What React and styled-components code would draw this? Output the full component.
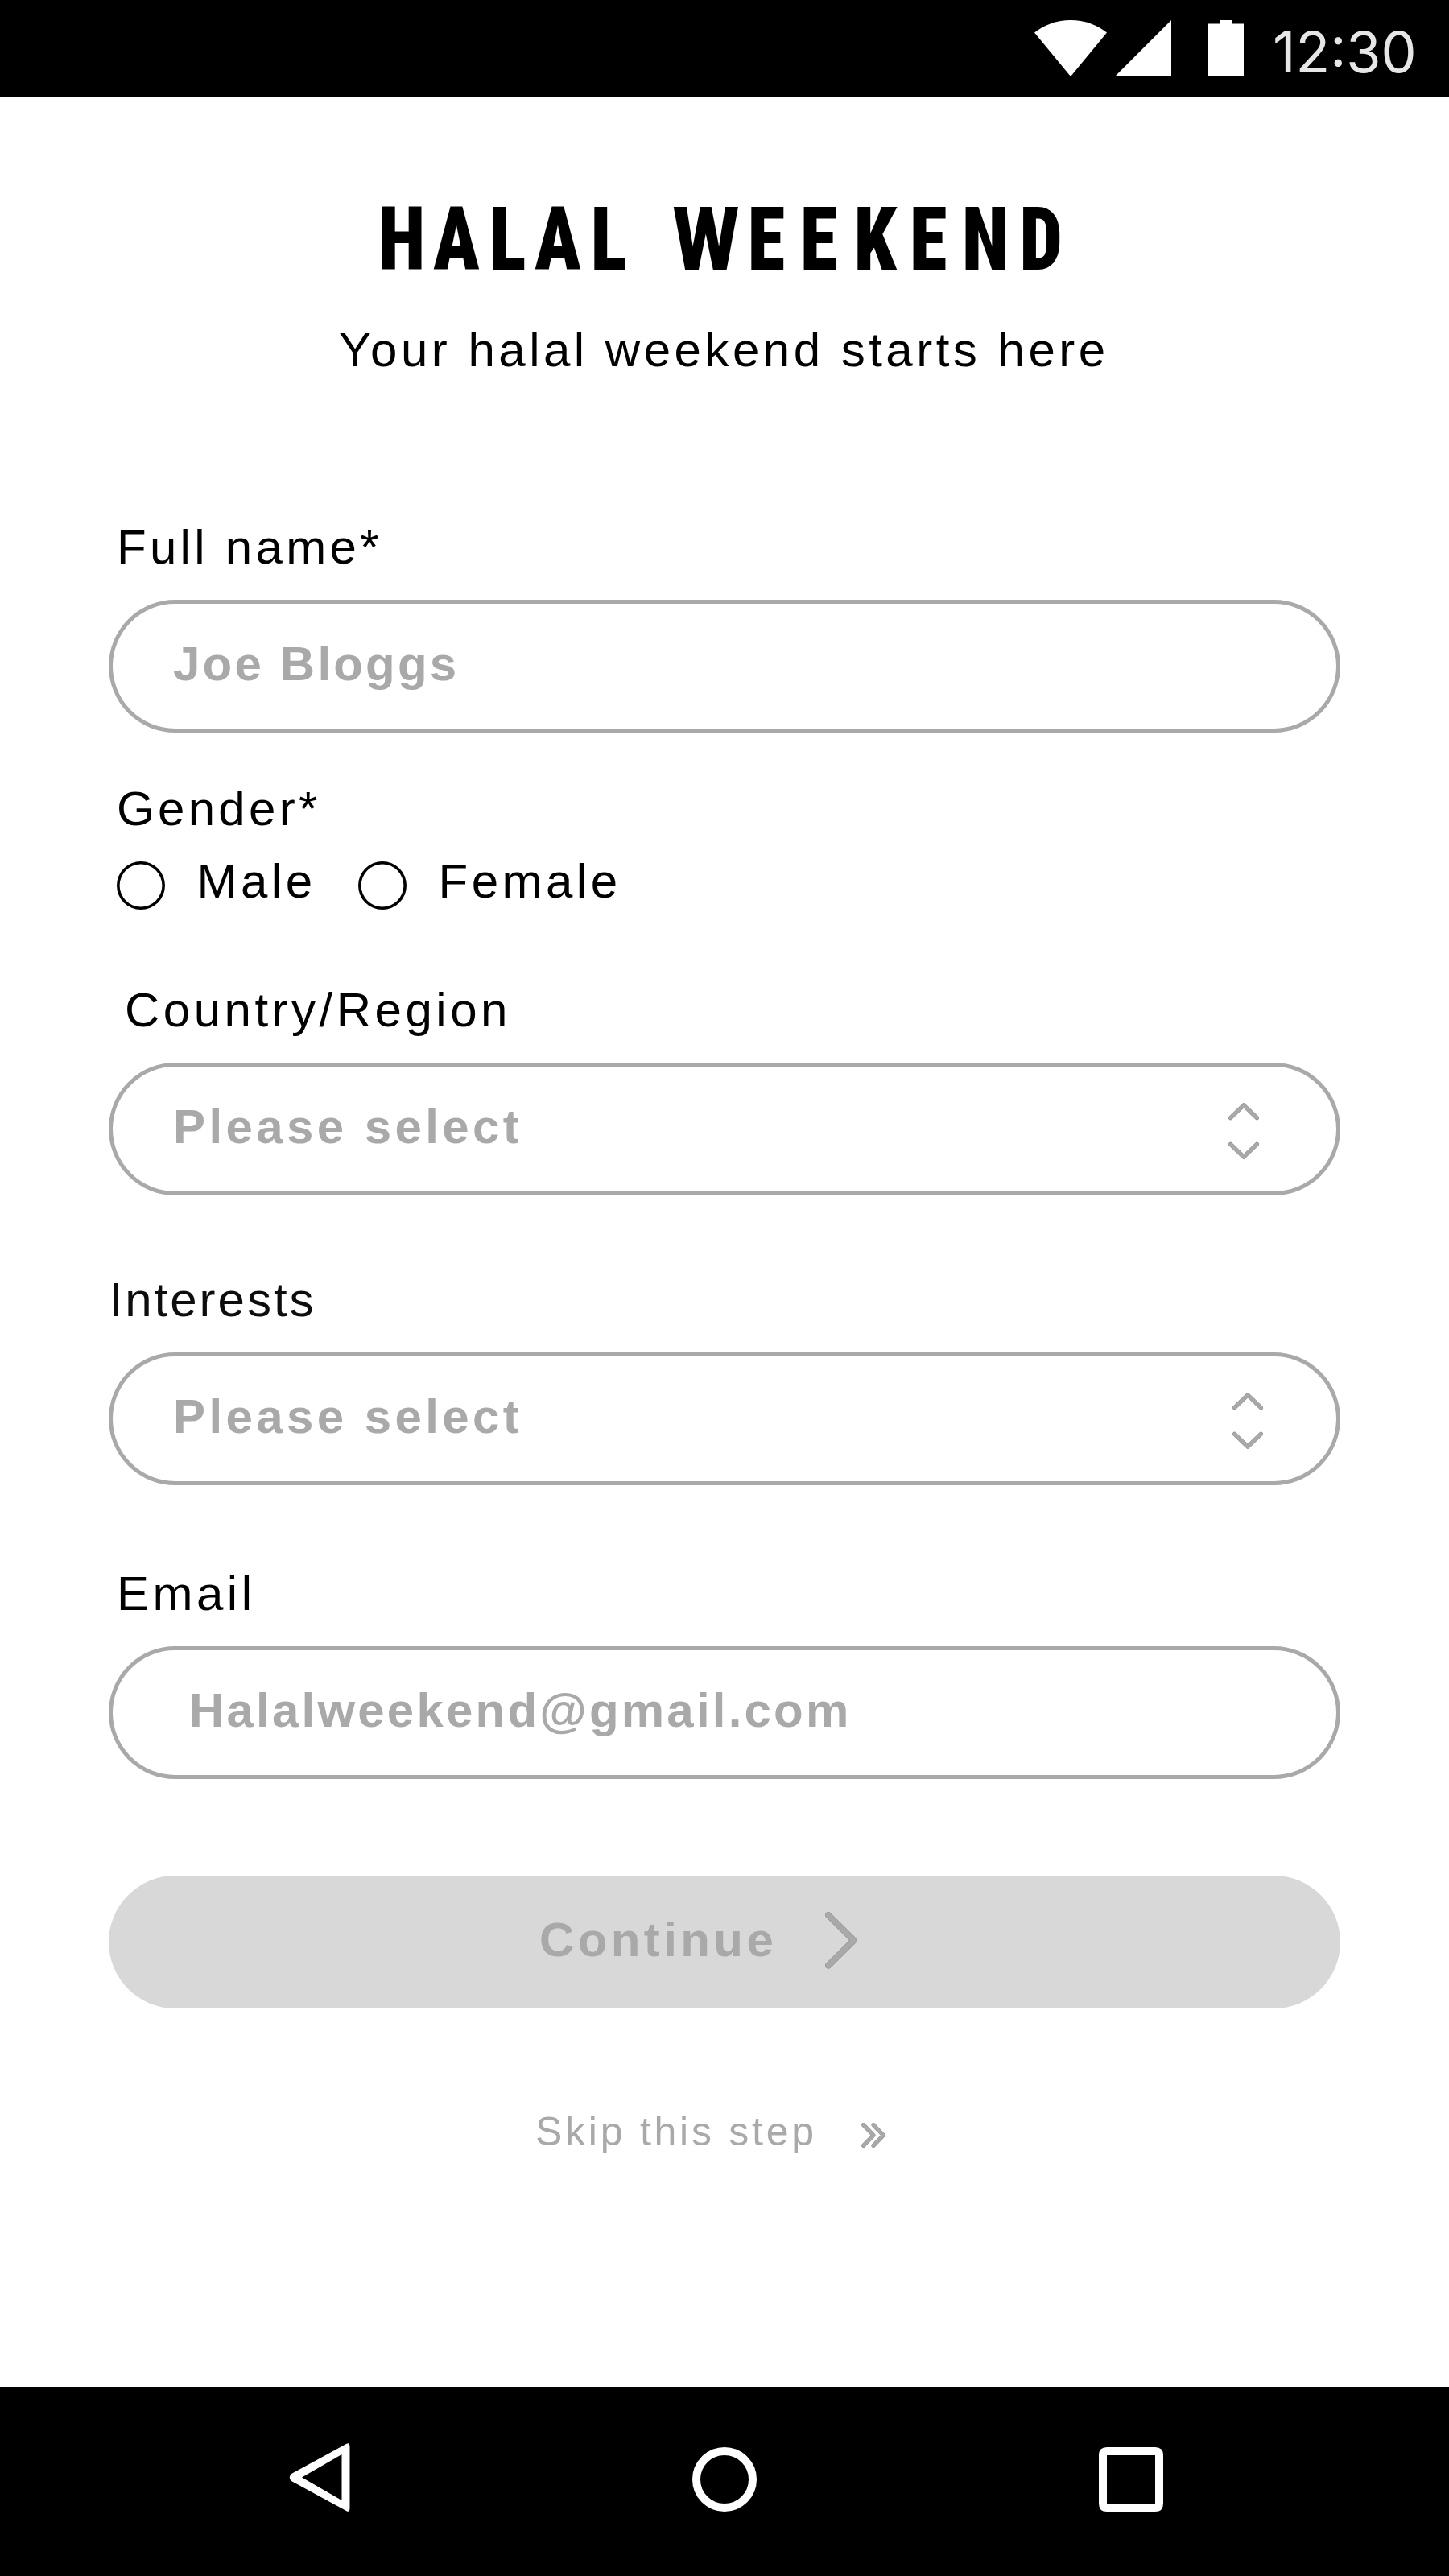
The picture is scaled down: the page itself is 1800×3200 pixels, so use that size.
import React from "react";
import styled, { createGlobalStyle } from "styled-components";

const GlobalStyle = createGlobalStyle`
  *, *::before, *::after { box-sizing: border-box; }
  body { margin: 0; background: #fff; }
`;

const Screen = styled.div`
  width: 1800px;
  height: 3200px;
  display: flex;
  flex-direction: column;
  background: #fff;
  color: #000;
  font-family: "Liberation Sans", Arial, Helvetica, sans-serif;
  font-size: 60px;
  line-height: 70px;
  letter-spacing: 4.5px;
  white-space: nowrap;
`;

const StatusBar = styled.header`
  height: 120px;
  display: flex;
  justify-content: flex-end;
  align-items: flex-start;
  padding: 25px 42px 0 0;
  background: #000;
`;

const StatusIcon = styled.svg`
  display: block;
  height: 70px;
  margin-right: ${(p) => p.$gap}px;
  fill: #fff;
`;

const Clock = styled.time`
  width: 177px;
  font: 400 70px/84px Inter, Roboto, sans-serif;
  letter-spacing: 0;
  color: #e6e6e6;
  margin-top: -2px;
`;

const Content = styled.main`
  flex: 1;
  display: flex;
  flex-direction: column;
  padding: 0 135px;
`;

const Brand = styled.h1`
  margin: 130px 0 0 335px;
  height: 100px;
  line-height: 0;
`;

const Wordmark = styled.svg`
  display: block;
  width: 860px;
  height: 100px;
  overflow: visible;

  text {
    font: condensed 900 109px Roboto, sans-serif;
    letter-spacing: 0;
  }
`;

const Stretch = styled.tspan`
  font-stretch: ${(p) => p.$to}%;
`;

const Tagline = styled.p`
  margin: 50px 0 0 286px;
`;

const Field = styled.section`
  display: flex;
  flex-direction: column;
  margin-top: ${(p) => p.$top}px;
`;

const Label = styled.label`
  margin: 0 0 ${(p) => p.$gap ?? 30}px ${(p) => p.$indent ?? 10}px;
  color: ${(p) => p.$color ?? "#000"};
  letter-spacing: ${(p) => p.$tracking ?? 4.5}px;
`;

const Control = styled.div`
  height: 165px;
  display: flex;
  justify-content: space-between;
  align-items: flex-start;
  padding: 40px ${(p) => p.$end ?? 96}px 0 ${(p) => p.$start ?? 75}px;
  border: 5px solid #a9a9a9;
  border-radius: 83px;
  color: #a9a9a9;
  font-weight: 700;
  letter-spacing: ${(p) => p.$tracking ?? 4.4}px;
`;

const Stepper = styled.svg`
  display: block;
  width: 38px;
  height: 70px;
  margin-top: 5px;
`;

const Options = styled.div`
  display: flex;
  margin-left: 10px;
`;

const Option = styled.label`
  display: flex;
  align-items: flex-start;
  width: 300px;
`;

const Radio = styled.span`
  flex: none;
  width: 60px;
  height: 60px;
  margin: 10px 39.5px 0 0;
  box-shadow: inset 0 0 0 3.6px #000;
  border-radius: 50%;
`;

const ContinueButton = styled.button`
  height: 165px;
  margin-top: 120px;
  padding: 45px 0 0 535px;
  display: flex;
  align-items: flex-start;
  border: 0;
  border-radius: 83px;
  background: #d8d8d8;
  color: #a9a9a9;
  font: inherit;
  font-weight: 700;
  letter-spacing: 4.4px;
`;

const SkipLink = styled.a`
  display: flex;
  margin: 125px 0 0 530px;
  color: #a9a9a9;
  font-size: 50px;
  line-height: 56px;
  letter-spacing: 3.75px;
`;

const ArrowIcon = styled.svg`
  display: block;
  width: ${(p) => p.$w}px;
  height: ${(p) => p.$h}px;
  margin: ${(p) => p.$top}px 0 0 ${(p) => p.$left}px;
`;

const NavBar = styled.nav`
  height: 235px;
  display: flex;
  justify-content: space-between;
  padding: 70px 355px 0 359px;
  background: #000;
`;

const NavIcon = styled.svg`
  display: block;
  width: ${(p) => p.$w}px;
  height: 85px;
`;

const strokes = {
  fill: "none",
  strokeLinecap: "round",
  strokeLinejoin: "round",
};

function Chevron({ d, width }) {
  return (
    <>
      <path d={d} {...strokes} stroke="#929292" strokeWidth={width} />
      <path d={d} {...strokes} stroke="#a9a9a9" strokeWidth={width - 1.2} />
    </>
  );
}

function UpDown() {
  return (
    <Stepper viewBox="0 0 38 70">
      <Chevron d="M2.600 18.600 19 2.900 35.400 18.600" width={5.4} />
      <Chevron d="M2.600 51.400 19 67.100 35.400 51.400" width={5.4} />
    </Stepper>
  );
}

export default function App() {
  return (
    <Screen>
      <GlobalStyle />
      <StatusBar>
        <StatusIcon width="90" viewBox="0 0 90 70" $gap={10}>
          <path d="M45 70 0 15.500C13 5.500 28 0 45 0s32 5.500 45 15.500z" />
        </StatusIcon>
        <StatusIcon width="70" viewBox="0 0 70 70" $gap={45}>
          <path d="M0 70 70 0v70z" />
        </StatusIcon>
        <StatusIcon width="45" viewBox="0 0 45 70" $gap={36}>
          <path d="M0 4.500h15V0h15v4.500h15V70H0z" />
        </StatusIcon>
        <Clock>12:30</Clock>
      </StatusBar>

      <Content>
        <Brand>
          <Wordmark viewBox="0 0 860 100">
            <text
              transform="scale(0.87 1)"
              x="0.4 78.5 158.7 223.3 303.2 370 420.3 527.4 602.3 679.1 758.5 833.2 915.6"
              y="85"
            >
              HALAL <Stretch $to={100}>W</Stretch><Stretch $to={87.5}>EE</Stretch>K<Stretch $to={87.5}>E</Stretch>ND
            </text>
          </Wordmark>
        </Brand>
        <Tagline>Your halal weekend starts here</Tagline>

        <Field $top={175}>
          <Label $tracking={4.3}>Full name*</Label>
          <Control $tracking={3.2}>Joe Bloggs</Control>
        </Field>

        <Field $top={60}>
          <Label $gap={20} $tracking={4.3}>Gender*</Label>
          <Options>
            <Option><Radio />Male</Option>
            <Option><Radio />Female</Option>
          </Options>
        </Field>

        <Field $top={90}>
          <Label $indent={20}>Country/Region</Label>
          <Control>Please select<UpDown /></Control>
        </Field>

        <Field $top={95}>
          <Label $indent={0.5} $color="#0d0d0d" $tracking={3}>Interests</Label>
          <Control $end={91}>Please select<UpDown /></Control>
        </Field>

        <Field $top={100}>
          <Label>Email</Label>
          <Control $start={95} $tracking={3.2}>Halalweekend@gmail.com</Control>
        </Field>

        <ContinueButton>
          Continue
          <ArrowIcon $w={40} $h={71} $top={0} $left={60} viewBox="0 0 40 71">
            <Chevron d="M4 4 35.600 35.300 4 66.600" width={8} />
          </ArrowIcon>
        </ContinueButton>

        <SkipLink>
          Skip this step
          <ArrowIcon $w={31} $h={31} $top={17} $left={55} viewBox="0 0 31 31">
            <Chevron d="M2.600 2.600 15 15.500 2.600 28.400" width={5.2} />
            <Chevron d="M15 2.600 27.400 15.500 15 28.400" width={5.2} />
          </ArrowIcon>
        </SkipLink>
      </Content>

      <NavBar>
        <NavIcon $w={76} viewBox="0 0 76 85">
          <path fill="#fff" fillRule="evenodd" d="M71.500 .8Q75.500 -1.500 75.500 5V80Q75.500 86.500 71.500 84.200L3 47Q-1.500 42.500 3 38zM65.500 14 16 42.500 65.500 71z" />
        </NavIcon>
        <NavIcon $w={80} viewBox="0 0 80 85">
          <circle cx="40" cy="45" r="35" fill="none" stroke="#fff" strokeWidth="10" />
        </NavIcon>
        <NavIcon $w={80} viewBox="0 0 80 85">
          <path fill="#fff" fillRule="evenodd" d="M10 5H70Q80 5 80 15V75Q80 85 70 85H10Q0 85 0 75V15Q0 5 10 5zM10 15V75H70V15z" />
        </NavIcon>
      </NavBar>
    </Screen>
  );
}
